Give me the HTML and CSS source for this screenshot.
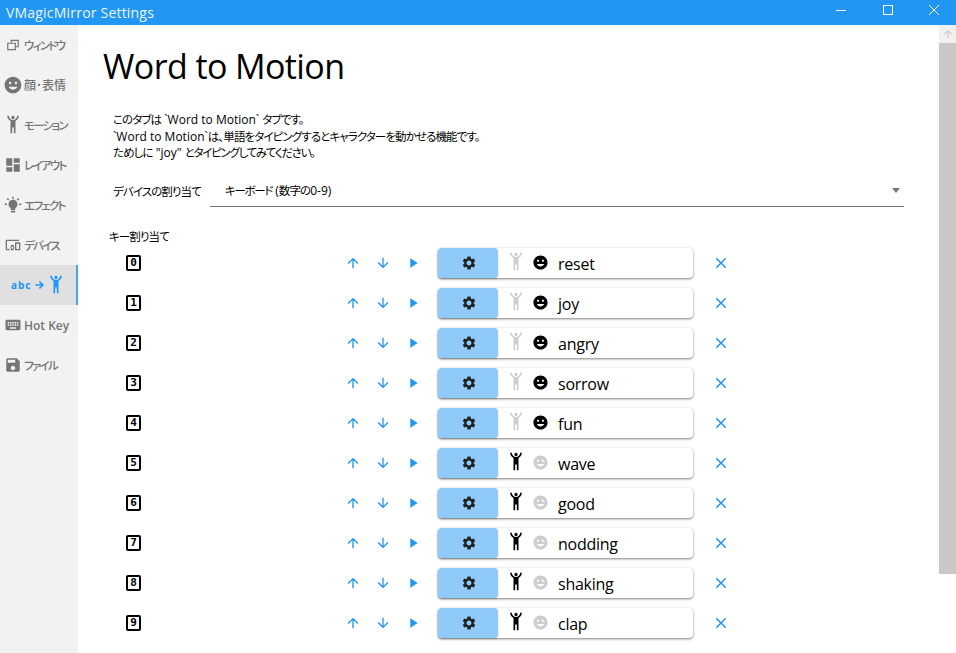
FILE: index.html
```html
<!DOCTYPE html>
<html lang="ja">
<head>
<meta charset="utf-8">
<title>VMagicMirror Settings</title>
<link rel="stylesheet" href="styles.css">
</head>
<body>
<svg class="sprite" xmlns="http://www.w3.org/2000/svg">
<symbol id="i-human" viewBox="0 0 24 24"><path d="M5,1C5,3.7 6.56,6.16 9,7.32V22H11V15H13V22H15V7.31C17.44,6.16 19,3.7 19,1H17A5,5 0 0,1 12,6A5,5 0 0,1 7,1M12,1A2,2 0 0,0 10,3A2,2 0 0,0 12,5A2,2 0 0,0 14,3A2,2 0 0,0 12,1Z"/></symbol>
<symbol id="i-face" viewBox="0 0 24 24"><path d="M11.99 2C6.47 2 2 6.48 2 12s4.47 10 9.99 10C17.52 22 22 17.52 22 12S17.52 2 11.99 2zM15.5 8c.83 0 1.5.67 1.5 1.5s-.67 1.5-1.5 1.5-1.5-.67-1.5-1.5.67-1.5 1.5-1.5zm-7 0c.83 0 1.5.67 1.5 1.5S9.33 11 8.5 11 7 10.33 7 9.5 7.67 8 8.5 8zm3.5 9.5c-2.33 0-4.31-1.46-5.11-3.5h10.22c-.8 2.04-2.78 3.5-5.11 3.5z"/></symbol>
<symbol id="i-gear" viewBox="0 0 24 24"><path d="M19.14 12.94c.04-.3.06-.61.06-.94 0-.32-.02-.64-.07-.94l2.03-1.58c.18-.14.23-.41.12-.61l-1.92-3.32c-.12-.22-.37-.29-.59-.22l-2.39.96c-.5-.38-1.03-.7-1.62-.94l-.36-2.54c-.04-.24-.24-.41-.48-.41h-3.84c-.24 0-.43.17-.47.41l-.36 2.54c-.59.24-1.13.57-1.62.94l-2.39-.96c-.22-.08-.47 0-.59.22L2.74 8.87c-.12.21-.08.47.12.61l2.03 1.58c-.05.3-.09.63-.09.94s.02.64.07.94l-2.03 1.58c-.18.14-.23.41-.12.61l1.92 3.32c.12.22.37.29.59.22l2.39-.96c.5.38 1.03.7 1.62.94l.36 2.54c.05.24.24.41.48.41h3.84c.24 0 .44-.17.47-.41l.36-2.54c.59-.24 1.13-.56 1.62-.94l2.39.96c.22.08.47 0 .59-.22l1.92-3.32c.12-.22.07-.47-.12-.61l-2.01-1.58zM12 15.6c-1.98 0-3.6-1.62-3.6-3.6s1.62-3.6 3.6-3.6 3.6 1.62 3.6 3.6-1.62 3.6-3.6 3.6z"/></symbol>
<symbol id="i-up" viewBox="0 0 24 24"><path d="M4 12l1.41 1.41L11 7.83V20h2V7.83l5.58 5.59L20 12l-8-8-8 8z"/></symbol>
<symbol id="i-down" viewBox="0 0 24 24"><path d="M20 12l-1.41-1.41L13 16.17V4h-2v12.17l-5.58-5.59L4 12l8 8 8-8z"/></symbol>
<symbol id="i-play" viewBox="0 0 24 24"><path d="M8 5v14l11-7z"/></symbol>
<symbol id="i-close" viewBox="0 0 24 24"><path d="M19 6.41L17.59 5 12 10.59 6.41 5 5 6.41 10.59 12 5 17.59 6.41 19 12 13.41 17.59 19 19 17.59 13.41 12z"/></symbol>
<symbol id="i-window" viewBox="0 0 24 24"><path d="M8 3h14v13h-5v5H2V8h6V3zm2 2v3h7v6h3V5H10zM4 10v9h11v-9H4z"/></symbol>
<symbol id="i-dash" viewBox="0 0 24 24"><path d="M3 13h8V3H3v10zm0 8h8v-6H3v6zm10 0h8V11h-8v10zm0-18v6h8V3h-8z"/></symbol>
<symbol id="i-bulb" viewBox="0 0 24 24"><path d="M9 21c0 .55.45 1 1 1h4c.55 0 1-.45 1-1v-1H9v1zm3-16c-3.31 0-6 2.69-6 6 0 2.22 1.21 4.15 3 5.19V18c0 .55.45 1 1 1h4c.55 0 1-.45 1-1v-1.81c1.79-1.04 3-2.97 3-5.19 0-3.31-2.69-6-6-6zM11 1h2v3h-2zM1 10h3v2H1zM20 10h3v2h-3zM3.5 3.9l1.4-1.4 2.1 2.1-1.4 1.4zM17 4.6l2.1-2.1 1.4 1.4-2.1 2.1z"/></symbol>
<symbol id="i-devices" viewBox="0 0 24 24"><path d="M3 6h18V4H3c-1.1 0-2 .9-2 2v12c0 1.1.9 2 2 2h4v-2H3V6zm10 6H9v1.78c-.61.55-1 1.33-1 2.22s.39 1.67 1 2.22V20h4v-1.78c.61-.55 1-1.34 1-2.22s-.39-1.67-1-2.22V12zm-2 5.5c-.83 0-1.5-.67-1.5-1.5s.67-1.5 1.5-1.5 1.5.67 1.5 1.5-.67 1.5-1.5 1.5zM22 8h-6c-.5 0-1 .5-1 1v10c0 .5.5 1 1 1h6c.5 0 1-.5 1-1V9c0-.5-.5-1-1-1zm-1 10h-4v-8h4v8z"/></symbol>
<symbol id="i-keyboard" viewBox="0 0 24 24"><path d="M20 5H4c-1.1 0-1.99.9-1.99 2L2 17c0 1.1.9 2 2 2h16c1.1 0 2-.9 2-2V7c0-1.1-.9-2-2-2zm-9 3h2v2h-2V8zm0 3h2v2h-2v-2zM8 8h2v2H8V8zm0 3h2v2H8v-2zm-1 2H5v-2h2v2zm0-3H5V8h2v2zm9 7H8v-2h8v2zm0-4h-2v-2h2v2zm0-3h-2V8h2v2zm3 3h-2v-2h2v2zm0-3h-2V8h2v2z"/></symbol>
<symbol id="i-save" viewBox="0 0 24 24"><path d="M17 3H5c-1.11 0-2 .9-2 2v14c0 1.1.89 2 2 2h14c1.1 0 2-.9 2-2V7l-4-4zm-5 16c-1.66 0-3-1.34-3-3s1.34-3 3-3 3 1.34 3 3-1.34 3-3 3zm3-10H5V5h10v4z"/></symbol>
<symbol id="i-arrow-right" viewBox="0 0 24 24"><path d="M12 4l-2.2 2.2 4.2 4.2H3v3.2h11l-4.2 4.2L12 20l8-8z"/></symbol>
</svg>

<header class="titlebar">
  <span class="titlebar-text">VMagicMirror Settings</span>
  <div class="window-buttons">
    <span class="win-btn"><span class="win-min"></span></span>
    <span class="win-btn"><span class="win-max"></span></span>
    <span class="win-btn"><svg class="win-close" viewBox="0 0 10 10"><path d="M0 0L10 10M10 0L0 10"/></svg></span>
  </div>
</header>

<div class="app">
  <nav class="sidebar">
    <div class="nav-item"><svg class="nav-icon window"><use href="#i-window"/></svg><span class="nav-ja">ウィンドウ</span></div>
    <div class="nav-item"><svg class="nav-icon large"><use href="#i-face"/></svg><span class="nav-kanji">顔･表情</span></div>
    <div class="nav-item"><svg class="nav-icon large"><use href="#i-human"/></svg><span class="nav-ja">モーション</span></div>
    <div class="nav-item"><svg class="nav-icon"><use href="#i-dash"/></svg><span class="nav-ja">レイアウト</span></div>
    <div class="nav-item"><svg class="nav-icon"><use href="#i-bulb"/></svg><span class="nav-ja">エフェクト</span></div>
    <div class="nav-item"><svg class="nav-icon devices"><use href="#i-devices"/></svg><span class="nav-ja">デバイス</span></div>
    <div class="nav-item active"><span class="abc">abc</span><svg class="active-arrow"><use href="#i-arrow-right"/></svg><svg class="active-human"><use href="#i-human"/></svg></div>
    <div class="nav-item"><svg class="nav-icon"><use href="#i-keyboard"/></svg><span class="nav-en">Hot Key</span></div>
    <div class="nav-item"><svg class="nav-icon"><use href="#i-save"/></svg><span class="nav-ja">ファイル</span></div>
  </nav>

  <main class="content">
    <h1 class="title">Word to Motion</h1>
    <p class="intro"><span class="ja">このタブは</span> `Word to Motion` <span class="ja">タブです。</span><br>`Word to Motion`<span class="ja">は、単語をタイピングするとキャラクターを動かせる機能です。</span><br><span class="ja">ためしに</span> "joy" <span class="ja tight">とタイピングしてみてください。</span></p>

    <div class="device-row">
      <span class="device-label ja">デバイスの割り当て</span>
      <div class="select"><span><span class="ja tight">キーボード</span> (<span class="ja">数字の</span>0-9)</span><span class="caret"></span></div>
    </div>

    <div class="key-heading ja">キー割り当て</div>

    <div class="rows">
      <div class="row"><div class="key-cell"><span class="key">0</span></div><span class="act"><svg class="a-icon"><use href="#i-up"/></svg></span><span class="act"><svg class="a-icon"><use href="#i-down"/></svg></span><span class="act"><svg class="a-icon"><use href="#i-play"/></svg></span><div class="card"><span class="card-btn"><svg class="gear"><use href="#i-gear"/></svg></span><svg class="human off"><use href="#i-human"/></svg><svg class="face"><use href="#i-face"/></svg><span class="word">reset</span></div><span class="act del"><svg class="x-icon"><use href="#i-close"/></svg></span></div>
      <div class="row"><div class="key-cell"><span class="key">1</span></div><span class="act"><svg class="a-icon"><use href="#i-up"/></svg></span><span class="act"><svg class="a-icon"><use href="#i-down"/></svg></span><span class="act"><svg class="a-icon"><use href="#i-play"/></svg></span><div class="card"><span class="card-btn"><svg class="gear"><use href="#i-gear"/></svg></span><svg class="human off"><use href="#i-human"/></svg><svg class="face"><use href="#i-face"/></svg><span class="word">joy</span></div><span class="act del"><svg class="x-icon"><use href="#i-close"/></svg></span></div>
      <div class="row"><div class="key-cell"><span class="key">2</span></div><span class="act"><svg class="a-icon"><use href="#i-up"/></svg></span><span class="act"><svg class="a-icon"><use href="#i-down"/></svg></span><span class="act"><svg class="a-icon"><use href="#i-play"/></svg></span><div class="card"><span class="card-btn"><svg class="gear"><use href="#i-gear"/></svg></span><svg class="human off"><use href="#i-human"/></svg><svg class="face"><use href="#i-face"/></svg><span class="word">angry</span></div><span class="act del"><svg class="x-icon"><use href="#i-close"/></svg></span></div>
      <div class="row"><div class="key-cell"><span class="key">3</span></div><span class="act"><svg class="a-icon"><use href="#i-up"/></svg></span><span class="act"><svg class="a-icon"><use href="#i-down"/></svg></span><span class="act"><svg class="a-icon"><use href="#i-play"/></svg></span><div class="card"><span class="card-btn"><svg class="gear"><use href="#i-gear"/></svg></span><svg class="human off"><use href="#i-human"/></svg><svg class="face"><use href="#i-face"/></svg><span class="word">sorrow</span></div><span class="act del"><svg class="x-icon"><use href="#i-close"/></svg></span></div>
      <div class="row"><div class="key-cell"><span class="key">4</span></div><span class="act"><svg class="a-icon"><use href="#i-up"/></svg></span><span class="act"><svg class="a-icon"><use href="#i-down"/></svg></span><span class="act"><svg class="a-icon"><use href="#i-play"/></svg></span><div class="card"><span class="card-btn"><svg class="gear"><use href="#i-gear"/></svg></span><svg class="human off"><use href="#i-human"/></svg><svg class="face"><use href="#i-face"/></svg><span class="word">fun</span></div><span class="act del"><svg class="x-icon"><use href="#i-close"/></svg></span></div>
      <div class="row"><div class="key-cell"><span class="key">5</span></div><span class="act"><svg class="a-icon"><use href="#i-up"/></svg></span><span class="act"><svg class="a-icon"><use href="#i-down"/></svg></span><span class="act"><svg class="a-icon"><use href="#i-play"/></svg></span><div class="card"><span class="card-btn"><svg class="gear"><use href="#i-gear"/></svg></span><svg class="human"><use href="#i-human"/></svg><svg class="face off"><use href="#i-face"/></svg><span class="word">wave</span></div><span class="act del"><svg class="x-icon"><use href="#i-close"/></svg></span></div>
      <div class="row"><div class="key-cell"><span class="key">6</span></div><span class="act"><svg class="a-icon"><use href="#i-up"/></svg></span><span class="act"><svg class="a-icon"><use href="#i-down"/></svg></span><span class="act"><svg class="a-icon"><use href="#i-play"/></svg></span><div class="card"><span class="card-btn"><svg class="gear"><use href="#i-gear"/></svg></span><svg class="human"><use href="#i-human"/></svg><svg class="face off"><use href="#i-face"/></svg><span class="word">good</span></div><span class="act del"><svg class="x-icon"><use href="#i-close"/></svg></span></div>
      <div class="row"><div class="key-cell"><span class="key">7</span></div><span class="act"><svg class="a-icon"><use href="#i-up"/></svg></span><span class="act"><svg class="a-icon"><use href="#i-down"/></svg></span><span class="act"><svg class="a-icon"><use href="#i-play"/></svg></span><div class="card"><span class="card-btn"><svg class="gear"><use href="#i-gear"/></svg></span><svg class="human"><use href="#i-human"/></svg><svg class="face off"><use href="#i-face"/></svg><span class="word">nodding</span></div><span class="act del"><svg class="x-icon"><use href="#i-close"/></svg></span></div>
      <div class="row"><div class="key-cell"><span class="key">8</span></div><span class="act"><svg class="a-icon"><use href="#i-up"/></svg></span><span class="act"><svg class="a-icon"><use href="#i-down"/></svg></span><span class="act"><svg class="a-icon"><use href="#i-play"/></svg></span><div class="card"><span class="card-btn"><svg class="gear"><use href="#i-gear"/></svg></span><svg class="human"><use href="#i-human"/></svg><svg class="face off"><use href="#i-face"/></svg><span class="word">shaking</span></div><span class="act del"><svg class="x-icon"><use href="#i-close"/></svg></span></div>
      <div class="row"><div class="key-cell"><span class="key">9</span></div><span class="act"><svg class="a-icon"><use href="#i-up"/></svg></span><span class="act"><svg class="a-icon"><use href="#i-down"/></svg></span><span class="act"><svg class="a-icon"><use href="#i-play"/></svg></span><div class="card"><span class="card-btn"><svg class="gear"><use href="#i-gear"/></svg></span><svg class="human"><use href="#i-human"/></svg><svg class="face off"><use href="#i-face"/></svg><span class="word">clap</span></div><span class="act del"><svg class="x-icon"><use href="#i-close"/></svg></span></div>
    </div>
  </main>

  <div class="scrollbar">
    <div class="scroll-btn"><svg class="scroll-arrow"><use href="#i-up"/></svg></div>
    <div class="scroll-thumb"></div>
  </div>
</div>
</body>
</html>
```

FILE: styles.css
```css
* { box-sizing: border-box; }
html, body { margin: 0; height: 100%; overflow: hidden; }
body {
  display: flex;
  flex-direction: column;
  background: #fff;
  color: #000;
  font-family: "Open Sans", "Noto Sans CJK JP", sans-serif;
  font-feature-settings: "palt";
  font-size: 12px;
}
.sprite { display: none; }
svg { fill: currentColor; flex: none; display: block; }
.ja { font-size: 11.5px; letter-spacing: -.9px; }
.ja.tight { letter-spacing: -1.3px; }

.titlebar {
  height: 25px;
  flex: none;
  display: flex;
  align-items: center;
  justify-content: space-between;
  background: #2196f3;
  color: #fff;
  padding-left: 6px;
}
.titlebar-text { font-size: 14px; letter-spacing: .2px; color: #eaf5fe; }
.window-buttons { display: flex; height: 100%; padding-bottom: 5px; }
.win-btn { width: 46px; display: flex; align-items: center; justify-content: center; }
.win-btn + .win-btn { padding-left: 2px; }
.win-min { width: 10px; height: 1px; background: #fff; }
.win-max { width: 10px; height: 10px; border: 1px solid #fff; }
.win-close { width: 10px; height: 10px; fill: none; stroke: #fff; stroke-width: 1; }

.app { flex: 1; display: flex; min-height: 0; }

.sidebar { width: 78px; flex: none; background: #f2f2f2; }
.nav-item {
  height: 40px;
  display: flex;
  align-items: center;
  padding-left: 3px;
  gap: 1px;
  color: #757575;
  font-size: 12px;
  font-weight: 500;
  white-space: nowrap;
}
.nav-ja { font-size: 11.5px; font-weight: 500; letter-spacing: -1.7px; }
.nav-kanji { font-size: 12px; font-weight: 500; }
.nav-en { font-weight: 600; }
.nav-icon { width: 18px; height: 18px; margin: 0 1px; }
.nav-icon.large { width: 20px; height: 20px; margin: 0; }
.nav-icon.window { width: 14px; height: 14px; margin: 0 3px; }
.nav-icon.devices { width: 16px; height: 16px; margin: 0 2px; }
.nav-item.active {
  background: #e0e0e0;
  border-right: 2px solid #42a5f5;
  color: #2196f3;
  padding-left: 11px;
  gap: 0;
}
.abc { font-size: 10px; font-weight: 700; letter-spacing: 1px; width: 20px; }
.active-arrow { width: 12px; height: 12px; margin-left: 3px; }
.active-human { width: 20px; height: 20px; }

.content { flex: 1; min-width: 0; padding: 0 0 0 25px; overflow: hidden; }
.title {
  margin: 17px 0 0;
  font-size: 34px;
  font-weight: 400;
  letter-spacing: -.6px;
  line-height: 48px;
  font-family: "Open Sans", sans-serif;
}
.intro { margin: 22px 0 0 10px; font-size: 12px; line-height: 16.5px; }
.device-row { display: flex; align-items: center; margin: 13px 0 0 10px; }
.device-label { width: 97px; flex: none; white-space: nowrap; }
.select {
  width: 694px;
  height: 32px;
  display: flex;
  align-items: center;
  justify-content: space-between;
  border-bottom: 1px solid #757575;
  padding: 0 4px 0 15px;
}
.caret { width: 0; height: 0; border: 4px solid transparent; border-top: 5px solid #757575; border-bottom: 0; }
.key-heading { margin: 23px 0 0 6px; line-height: 13px; }

.row { display: flex; align-items: center; height: 40px; }
.key-cell { width: 235px; flex: none; padding-left: 23px; }
.key {
  display: flex;
  width: 15px;
  height: 16px;
  align-items: center;
  justify-content: center;
  border: 2px solid #000;
  border-radius: 2px;
  font-family: "DejaVu Sans Mono", monospace;
  font-size: 11px;
  font-weight: 700;
  line-height: 1;
}
.act { width: 30px; height: 30px; flex: none; display: flex; align-items: center; justify-content: center; color: #2196f3; }
.a-icon { width: 16px; height: 16px; }
.x-icon { width: 18px; height: 18px; }
.del { margin-left: 13px; }
.card {
  width: 255px;
  height: 30px;
  flex: none;
  margin-left: 10px;
  display: flex;
  align-items: center;
  background: #fff;
  border-radius: 4px;
  box-shadow: 0 1px 3px rgba(0,0,0,.3), 0 1px 2px rgba(0,0,0,.25);
}
.card-btn {
  width: 60px;
  height: 30px;
  flex: none;
  display: flex;
  align-items: center;
  justify-content: center;
  padding-left: 2px;
  background: #90caf9;
  border-radius: 4px;
  box-shadow: 0 1px 2px rgba(0,0,0,.2);
  color: #212121;
}
.gear { width: 16px; height: 16px; }
.human { width: 20px; height: 20px; margin-left: 8px; margin-top: -2px; }
.face { width: 17px; height: 17px; margin-left: 6px; }
.human.off, .face.off { color: #cfcfcf; }
.word { margin: 2px 0 0 9px; font-size: 16px; letter-spacing: -.25px; line-height: 22px; }

.scrollbar { width: 17px; flex: none; display: flex; flex-direction: column; background: #fff; }
.scroll-btn { height: 18px; background: #f0f0f0; display: flex; align-items: center; justify-content: center; color: #c8c8c8; }
.scroll-arrow { width: 12px; height: 12px; }
.scroll-thumb { height: 531px; background: #c8c8c8; }
```
